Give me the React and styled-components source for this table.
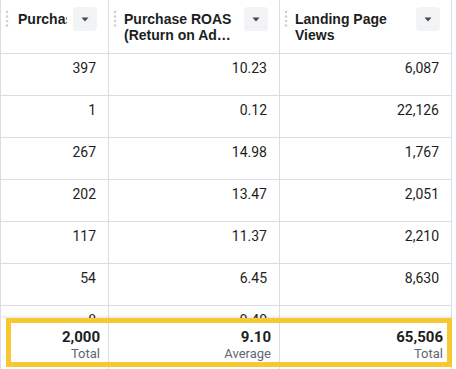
import React from "react"
import styled, { createGlobalStyle } from 'styled-components'

const Global = createGlobalStyle`
html,body{margin:0;padding:0;background:#fff;}
body{font-family:Roboto,"Liberation Sans",Arial,sans-serif;color:#1c1e21;}
`

const cols = '108px 171px 172px'

const Table = styled.div`
position:relative;
width:452px;
height:369px;
overflow:hidden;
border-left:1px solid #dadde1;
box-sizing:border-box;
display:flex;
flex-direction:column;
`

const HeadRow = styled.div`
display:grid;
grid-template-columns:${cols};
height:54px;
border-bottom:1px solid #dadde1;
box-sizing:border-box;
flex:none;
`

const HeadCell = styled.div`
display:flex;
align-items:flex-start;
padding:7px 11px 0 4px;
border-right:1px solid #dadde1;
box-sizing:border-box;
min-width:0;
`

const Grip = styled.svg`
flex:none;
width:4px;
height:18px;
margin-top:3px;
`

const Title = styled.div`
flex:1;
min-width:0;
margin:4px 6px 0 ${p => p.$first ? 9 : 7}px;
font-family:"Liberation Sans",Arial,sans-serif;
font-weight:bold;
font-size:14px;
line-height:16px;
color:#1c1e21;
display:-webkit-box;
-webkit-line-clamp:2;
-webkit-box-orient:vertical;
overflow:hidden;
`

const DropBtn = styled.div`
flex:none;
width:24px;
height:24px;
border-radius:4px;
background:#f2f3f5;
display:flex;
align-items:center;
justify-content:center;
`

const Body = styled.div`
height:264px;
overflow:hidden;
flex:none;
`

const Row = styled.div`
display:grid;
grid-template-columns:${cols};
height:42px;
border-bottom:1px solid #dadde1;
box-sizing:border-box;
`

const Cell = styled.div`
border-right:1px solid #dadde1;
box-sizing:border-box;
padding:6px 12px 0 8px;
text-align:right;
font-size:14px;
line-height:16px;
color:#1c1e21;
`

const Foot = styled.div`
flex:1;
display:grid;
grid-template-columns:${cols};
background:#fff;
box-shadow:0 -1px 3px rgba(0,0,0,0.12);
position:relative;
`

const FootCell = styled.div`
border-right:1px solid #dadde1;
box-sizing:border-box;
padding:10px 8px 0 8px;
text-align:right;
`

const FootValue = styled.div`
font-weight:bold;
font-size:15px;
line-height:18px;
color:#1c1e21;
`

const FootLabel = styled.div`
font-size:13px;
line-height:15px;
color:#606770;
`

// yellow annotation box drawn over the totals row
const Highlight = styled.div`
position:absolute;
left:5px;
top:318px;
width:446px;
height:49px;
border:5px solid #f6c933;
box-sizing:border-box;
pointer-events:none;
`

const headers = ['Purchases', 'Purchase ROAS (Return on Ad Spend)', 'Landing Page Views']

const rows = [
  ['397', '10.23', '6,087'],
  ['1', '0.12', '22,126'],
  ['267', '14.98', '1,767'],
  ['202', '13.47', '2,051'],
  ['117', '11.37', '2,210'],
  ['54', '6.45', '8,630'],
  ['8', '9.40', ''],
]

const totals = [['2,000', 'Total'], ['9.10', 'Average'], ['65,506', 'Total']]

const GripIcon = () => (
  <Grip viewBox="0 0 4 18">
    {[2, 6.5, 11, 15.5].map(y => <circle key={y} cx="2" cy={y} r="1.3" fill="#ccd0d5" />)}
  </Grip>
)

const Caret = () => (
  <svg width="8" height="5" viewBox="0 0 8 5">
    <path d="M0.5 0.5h7L4 4.5z" fill="#444950" />
  </svg>
)

const App = () => {
  return (
    <>
      <Global />
      <Table>
        <HeadRow>
          {headers.map((h, i) => (
            <HeadCell key={h}>
              <GripIcon />
              <Title $first={i === 0}>{h}</Title>
              <DropBtn><Caret /></DropBtn>
            </HeadCell>
          ))}
        </HeadRow>
        <Body>
          {rows.map((r, i) => (
            <Row key={i}>
              {r.map((v, j) => <Cell key={j}>{v}</Cell>)}
            </Row>
          ))}
        </Body>
        <Foot>
          {totals.map(([v, l], i) => (
            <FootCell key={i}>
              <FootValue>{v}</FootValue>
              <FootLabel>{l}</FootLabel>
            </FootCell>
          ))}
        </Foot>
        <Highlight />
      </Table>
    </>
  )
}

export default App
